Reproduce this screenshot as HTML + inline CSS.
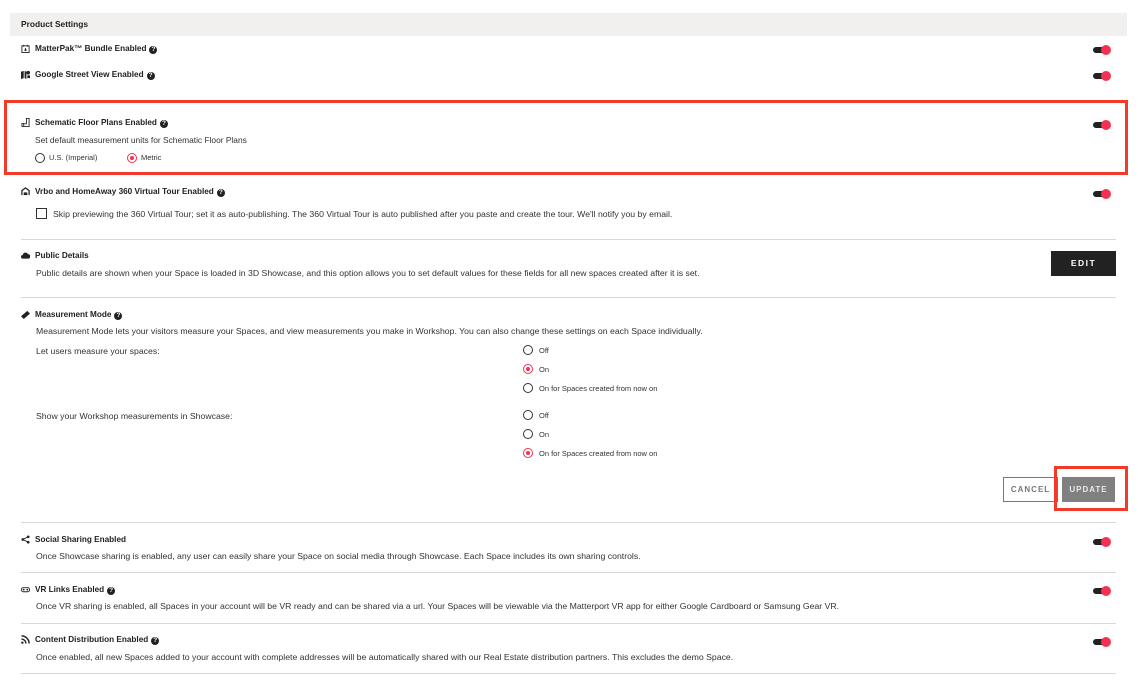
<!DOCTYPE html>
<html><head><meta charset="utf-8"><style>
*{margin:0;padding:0;box-sizing:border-box}
body{width:1138px;height:682px;background:#fff;position:relative;overflow:hidden;font-family:"Liberation Sans",sans-serif;color:#222}
.a{position:absolute;white-space:nowrap;line-height:12px}
.t{font-size:8.2px;font-weight:bold;color:#222}
.d{font-size:8.7px;color:#333}
.s{font-size:7.5px;color:#333}
.q{display:inline-block;width:8px;height:8px;border-radius:50%;background:#222;color:#fff;font-size:6.5px;line-height:8px;text-align:center;vertical-align:0px;margin-left:3px;font-weight:bold}
.tg{position:absolute;width:20px;height:12px}
.tg:before{content:"";position:absolute;left:0;top:3px;width:16px;height:6px;border-radius:3px;background:#222}
.tg:after{content:"";position:absolute;left:8px;top:1px;width:10px;height:10px;border-radius:50%;background:#f43152}
.hr{position:absolute;left:21px;width:1095px;height:1px;background:#d8d8d8}
.r{position:absolute;width:10px;height:10px;border-radius:50%;border:1px solid #333}
.r.on{border-color:#f43152}
.r.on:after{content:"";position:absolute;left:2px;top:2px;width:4px;height:4px;border-radius:50%;background:#f43152}
.ic{position:absolute;width:9px;height:9px}
</style></head><body>
<div style="position:absolute;left:10px;top:13px;width:1117px;height:23px;background:#f1f0ef"></div>
<div class="a t" style="left:21px;top:18px;font-size:8.4px">Product Settings</div>

<svg class="ic" style="left:21px;top:44px" viewBox="0 0 10 10"><rect x="1" y="2" width="8" height="7.5" fill="none" stroke="#222"/><path d="M3 1v2M7 1v2M5 4.5v3M3.8 6.3L5 7.5 6.2 6.3" stroke="#222" fill="none"/></svg>
<div class="a t" style="left:35px;top:43px">MatterPak™ Bundle Enabled<span class="q">?</span></div>
<div class="tg" style="left:1093px;top:44px"></div>

<svg class="ic" style="left:21px;top:70px" viewBox="0 0 10 10"><path d="M0 2l3-1v8l-3 1zM4 1l2 1v8l-2-1z" fill="#222"/><circle cx="8" cy="3" r="2" fill="#222"/><path d="M7 6h3v3H7z" fill="#222"/></svg>
<div class="a t" style="left:35px;top:69px">Google Street View Enabled<span class="q">?</span></div>
<div class="tg" style="left:1093px;top:70px"></div>

<div style="position:absolute;left:4px;top:100px;width:1124px;height:75px;border:3px solid #f33a2a"></div>
<svg class="ic" style="left:21px;top:118px" viewBox="0 0 10 10"><path d="M1 9.5h8V.5H6v6H3v3M1 9.5V6h2" fill="none" stroke="#222"/></svg>
<div class="a t" style="left:35px;top:117px">Schematic Floor Plans Enabled<span class="q">?</span></div>
<div class="tg" style="left:1093px;top:119px"></div>
<div class="a d" style="left:35px;top:134px;font-size:8.4px">Set default measurement units for Schematic Floor Plans</div>
<div class="r" style="left:35px;top:153px"></div>
<div class="a s" style="left:49px;top:152px">U.S. (Imperial)</div>
<div class="r on" style="left:127px;top:153px"></div>
<div class="a s" style="left:141px;top:152px">Metric</div>

<svg class="ic" style="left:21px;top:187px" viewBox="0 0 10 10"><path d="M1 9V4l4-3 4 3v5" fill="none" stroke="#222" stroke-width="1.4"/><path d="M3 6h4v3H3z" fill="#222"/></svg>
<div class="a t" style="left:35px;top:186px">Vrbo and HomeAway 360 Virtual Tour Enabled<span class="q">?</span></div>
<div class="tg" style="left:1093px;top:188px"></div>
<div style="position:absolute;left:36px;top:208px;width:11px;height:11px;border:1px solid #333"></div>
<div class="a d" style="left:53px;top:208px">Skip previewing the 360 Virtual Tour; set it as auto-publishing. The 360 Virtual Tour is auto published after you paste and create the tour. We'll notify you by email.</div>

<div class="hr" style="top:239px"></div>
<svg class="ic" style="left:21px;top:251px" viewBox="0 0 10 10"><path d="M2 8.5a2 2 0 010-4 3 3 0 015.7-1A2.3 2.3 0 018 8.5z" fill="#222"/></svg>
<div class="a t" style="left:35px;top:250px">Public Details</div>
<div class="a d" style="left:36px;top:267px">Public details are shown when your Space is loaded in 3D Showcase, and this option allows you to set default values for these fields for all new spaces created after it is set.</div>
<div style="position:absolute;left:1051px;top:251px;width:65px;height:25px;background:#222;color:#fff;font-size:8.5px;font-weight:bold;letter-spacing:1.5px;text-align:center;line-height:25px">EDIT</div>

<div class="hr" style="top:297px"></div>
<svg class="ic" style="left:21px;top:310px" viewBox="0 0 10 10"><path d="M0 7l7-6 3 3-7 6z" fill="#222"/></svg>
<div class="a t" style="left:35px;top:309px">Measurement Mode<span class="q">?</span></div>
<div class="a d" style="left:36px;top:325px">Measurement Mode lets your visitors measure your Spaces, and view measurements you make in Workshop. You can also change these settings on each Space individually.</div>
<div class="a d" style="left:36px;top:345px">Let users measure your spaces:</div>
<div class="r" style="left:523px;top:345px"></div><div class="a s" style="left:539px;top:345px">Off</div>
<div class="r on" style="left:523px;top:364px"></div><div class="a s" style="left:539px;top:364px">On</div>
<div class="r" style="left:523px;top:383px"></div><div class="a s" style="left:539px;top:383px">On for Spaces created from now on</div>
<div class="a d" style="left:36px;top:410px">Show your Workshop measurements in Showcase:</div>
<div class="r" style="left:523px;top:410px"></div><div class="a s" style="left:539px;top:410px">Off</div>
<div class="r" style="left:523px;top:429px"></div><div class="a s" style="left:539px;top:429px">On</div>
<div class="r on" style="left:523px;top:448px"></div><div class="a s" style="left:539px;top:448px">On for Spaces created from now on</div>

<div style="position:absolute;left:1003px;top:477px;width:55px;height:25px;border:1px solid #777;color:#777;font-size:8px;font-weight:bold;letter-spacing:1px;text-align:center;line-height:23px">CANCEL</div>
<div style="position:absolute;left:1054px;top:466px;width:74px;height:45px;border:3px solid #f33a2a"></div>
<div style="position:absolute;left:1062px;top:477px;width:53px;height:25px;background:#808080;color:#e8e8e8;font-size:8px;font-weight:bold;letter-spacing:1px;text-align:center;line-height:25px">UPDATE</div>

<div class="hr" style="top:522px"></div>
<svg class="ic" style="left:21px;top:535px" viewBox="0 0 10 10"><circle cx="8" cy="2" r="1.5" fill="#222"/><circle cx="8" cy="8" r="1.5" fill="#222"/><circle cx="2" cy="5" r="1.5" fill="#222"/><path d="M8 2L2 5l6 3" stroke="#222" fill="none"/></svg>
<div class="a t" style="left:35px;top:534px">Social Sharing Enabled</div>
<div class="tg" style="left:1093px;top:536px"></div>
<div class="a d" style="left:36px;top:550px">Once Showcase sharing is enabled, any user can easily share your Space on social media through Showcase. Each Space includes its own sharing controls.</div>

<div class="hr" style="top:572px"></div>
<svg class="ic" style="left:21px;top:585px" viewBox="0 0 10 10"><rect x="0.5" y="3" width="9" height="4.5" rx="2" fill="none" stroke="#222"/><circle cx="3" cy="5.2" r="1" fill="#222"/><circle cx="7" cy="5.2" r="1" fill="#222"/></svg>
<div class="a t" style="left:35px;top:584px">VR Links Enabled<span class="q">?</span></div>
<div class="tg" style="left:1093px;top:585px"></div>
<div class="a d" style="left:36px;top:600px">Once VR sharing is enabled, all Spaces in your account will be VR ready and can be shared via a url. Your Spaces will be viewable via the Matterport VR app for either Google Cardboard or Samsung Gear VR.</div>

<div class="hr" style="top:623px"></div>
<svg class="ic" style="left:21px;top:635px" viewBox="0 0 10 10"><circle cx="1.5" cy="8.5" r="1.3" fill="#222"/><path d="M0.5 4.5a5 5 0 015 5M0.5 1a8.5 8.5 0 018.5 8.5" stroke="#222" stroke-width="1.6" fill="none"/></svg>
<div class="a t" style="left:35px;top:634px">Content Distribution Enabled<span class="q">?</span></div>
<div class="tg" style="left:1093px;top:636px"></div>
<div class="a d" style="left:36px;top:651px">Once enabled, all new Spaces added to your account with complete addresses will be automatically shared with our Real Estate distribution partners. This excludes the demo Space.</div>
<div class="hr" style="top:673px"></div>
</body></html>
